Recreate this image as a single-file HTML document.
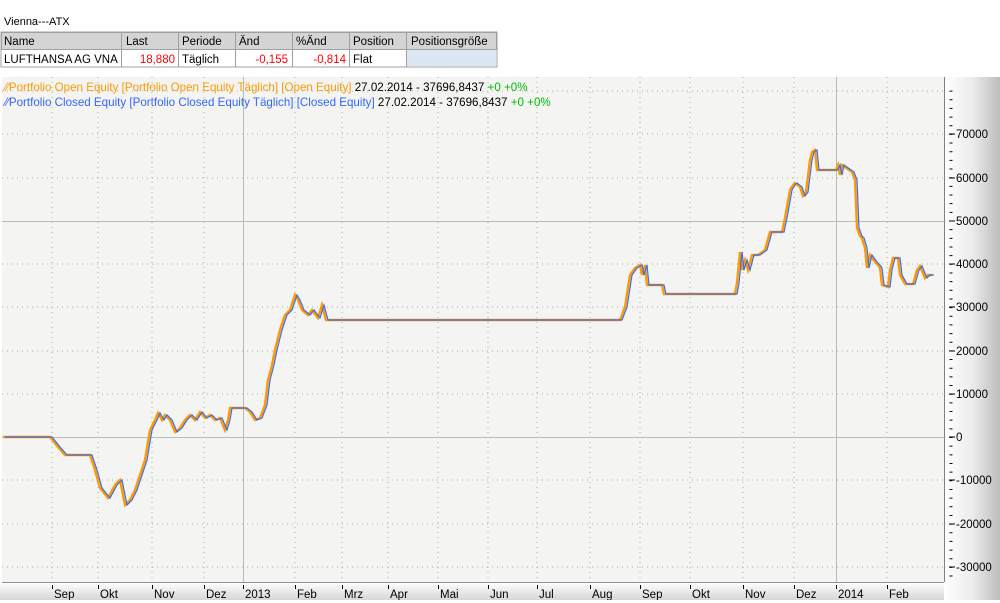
<!DOCTYPE html>
<html><head><meta charset="utf-8"><style>
body{margin:0;width:1000px;height:600px;overflow:hidden;background:#fff;font-family:"Liberation Sans",sans-serif;font-size:11px;}
</style></head><body>
<svg width="1000" height="600" xmlns="http://www.w3.org/2000/svg" font-family="Liberation Sans, sans-serif" font-size="11">
<defs>
<linearGradient id="rg" x1="0" x2="1"><stop offset="0" stop-color="#fff"/><stop offset="0.5" stop-color="#ececec"/><stop offset="1" stop-color="#bdbdbd"/></linearGradient>
<linearGradient id="bg" x1="0" y1="0" x2="0" y2="1"><stop offset="0" stop-color="#fff"/><stop offset="1" stop-color="#d6d6d6"/></linearGradient>
<polyline id="p" points="3,437 50,437 58,447 65,455 90,455 95,470 100,488 108,498 115,485 120,480 125,505 130,500 135,490 140,475 145,460 150,430 155,420 158,413 162,420 165,415 170,420 175,432 180,428 185,420 190,415 195,420 200,412 205,418 210,415 215,420 220,418 225,430 228,420 230,408 245,408 250,412 255,420 260,418 265,405 268,380 272,365 275,350 280,330 285,315 290,310 295,295 298,300 302,310 308,315 312,310 318,318 322,305 326,320 620,320 625,307 630,275 635,268 640,265 642,275 645,265 647,285 662,285 664,294 735,294 737,283 740,252 742,270 745,260 748,270 752,255 758,255 765,250 770,232 782,232 785,218 790,190 793,185 795,183 800,187 803,196 806,192 810,160 812,152 815,150 817,170 836,170 838,165 840,175 842,165 852,172 855,180 857,228 860,236 862,238 865,248 867,268 870,255 875,262 878,265 880,268 882,285 888,287 890,270 893,258 898,258 900,275 905,284 913,284 917,270 920,266 925,278 928,275 932,275"/>
</defs>
<text x="4" y="25" fill="#000">Vienna---ATX</text>
<rect x="1" y="32" width="496" height="35" fill="#fff" stroke="#a0a0a0"/>
<rect x="1.5" y="32.5" width="495" height="17" fill="#d4d4d4" stroke="#a0a0a0"/>
<rect x="407" y="50" width="89" height="16" fill="#dde7f3"/>
<g stroke="#a0a0a0"><line x1="121.5" y1="32" x2="121.5" y2="67"/><line x1="178.5" y1="32" x2="178.5" y2="67"/><line x1="235.5" y1="32" x2="235.5" y2="67"/><line x1="292.5" y1="32" x2="292.5" y2="67"/><line x1="349.5" y1="32" x2="349.5" y2="67"/><line x1="406.5" y1="32" x2="406.5" y2="67"/></g>
<g fill="#000" font-size="11.5"><text x="4" y="45">Name</text><text x="126" y="45">Last</text><text x="182" y="45">Periode</text><text x="239" y="45">Änd</text><text x="296" y="45">%Änd</text><text x="353" y="45">Position</text><text x="411" y="45">Positionsgröße</text>
<text x="4" y="63">LUFTHANSA AG VNA</text><text x="182" y="63">Täglich</text><text x="353" y="63">Flat</text></g>
<g fill="#f00" text-anchor="end" font-size="11.5"><text x="175" y="63">18,880</text><text x="288" y="63">-0,155</text><text x="346" y="63">-0,814</text></g>
<rect x="2" y="77" width="942" height="505" fill="#f4f4f3"/>
<rect x="944" y="77" width="56" height="523" fill="url(#rg)"/>
<rect x="0" y="582" width="944" height="18" fill="url(#bg)"/>
<line x1="944.5" y1="77" x2="944.5" y2="582" stroke="#808080"/>
<line x1="2" y1="582.5" x2="944" y2="582.5" stroke="#909090"/>
<g stroke="#a9b9a4" stroke-dasharray="1,4">
<line x1="2" y1="91" x2="944" y2="91"/><line x1="2" y1="134" x2="944" y2="134"/><line x1="2" y1="178" x2="944" y2="178"/><line x1="2" y1="264" x2="944" y2="264"/><line x1="2" y1="307" x2="944" y2="307"/><line x1="2" y1="351" x2="944" y2="351"/><line x1="2" y1="394" x2="944" y2="394"/><line x1="2" y1="480" x2="944" y2="480"/><line x1="2" y1="524" x2="944" y2="524"/><line x1="2" y1="567" x2="944" y2="567"/>
<line x1="52" y1="77" x2="52" y2="582"/><line x1="98" y1="77" x2="98" y2="582"/><line x1="152" y1="77" x2="152" y2="582"/><line x1="204" y1="77" x2="204" y2="582"/><line x1="295" y1="77" x2="295" y2="582"/><line x1="342" y1="77" x2="342" y2="582"/><line x1="388" y1="77" x2="388" y2="582"/><line x1="438" y1="77" x2="438" y2="582"/><line x1="488" y1="77" x2="488" y2="582"/><line x1="537" y1="77" x2="537" y2="582"/><line x1="590" y1="77" x2="590" y2="582"/><line x1="640" y1="77" x2="640" y2="582"/><line x1="690" y1="77" x2="690" y2="582"/><line x1="743" y1="77" x2="743" y2="582"/><line x1="794" y1="77" x2="794" y2="582"/><line x1="887" y1="77" x2="887" y2="582"/>
</g>
<g stroke="#b3c2b0"><line x1="2" y1="221.5" x2="944" y2="221.5"/><line x1="2" y1="437.5" x2="944" y2="437.5"/><line x1="243.5" y1="77" x2="243.5" y2="582"/><line x1="836.5" y1="77" x2="836.5" y2="582"/></g>
<g font-size="11.6">
<text x="5" y="91" fill="#f90">⁄∕Portfolio Open Equity [Portfolio Open Equity  Täglich] [Open Equity] <tspan fill="#000">27.02.2014 - 37696,8437 </tspan><tspan fill="#0b0">+0 +0%</tspan></text>
<text x="5" y="106" fill="#3366ff">⁄∕Portfolio Closed Equity [Portfolio Closed Equity  Täglich] [Closed Equity] <tspan fill="#000">27.02.2014 - 37696,8437 </tspan><tspan fill="#0b0">+0 +0%</tspan></text>
</g>
<g fill="none" stroke-linejoin="miter">
<use href="#p" stroke="#f90" stroke-width="2.4"/>
<use href="#p" stroke="#3a6cf0" stroke-width="1.2" transform="translate(2,0)"/>
</g>
<line x1="951" y1="90.6" x2="951" y2="582" stroke="#000" stroke-width="3" stroke-dasharray="1 7.66"/>
<g fill="#000" font-size="11.5">
<text x="956" y="138">70000</text><text x="956" y="182">60000</text><text x="956" y="225">50000</text><text x="956" y="268">40000</text><text x="956" y="311">30000</text><text x="956" y="355">20000</text><text x="956" y="398">10000</text><text x="956" y="441">0</text><text x="956" y="484">-10000</text><text x="956" y="528">-20000</text><text x="956" y="571">-30000</text>
</g>
<g stroke="#000">
<line x1="949" y1="134" x2="955" y2="134"/><line x1="949" y1="178" x2="955" y2="178"/><line x1="949" y1="221" x2="955" y2="221"/><line x1="949" y1="264" x2="955" y2="264"/><line x1="949" y1="307" x2="955" y2="307"/><line x1="949" y1="351" x2="955" y2="351"/><line x1="949" y1="394" x2="955" y2="394"/><line x1="949" y1="437" x2="955" y2="437"/><line x1="949" y1="480" x2="955" y2="480"/><line x1="949" y1="524" x2="955" y2="524"/><line x1="949" y1="567" x2="955" y2="567"/>
</g>
<g stroke="#000"><line x1="52.5" y1="585" x2="52.5" y2="589"/><line x1="98.5" y1="585" x2="98.5" y2="589"/><line x1="152.5" y1="585" x2="152.5" y2="589"/><line x1="204.5" y1="585" x2="204.5" y2="589"/><line x1="243.5" y1="585" x2="243.5" y2="589"/><line x1="295.5" y1="585" x2="295.5" y2="589"/><line x1="342.5" y1="585" x2="342.5" y2="589"/><line x1="388.5" y1="585" x2="388.5" y2="589"/><line x1="438.5" y1="585" x2="438.5" y2="589"/><line x1="488.5" y1="585" x2="488.5" y2="589"/><line x1="537.5" y1="585" x2="537.5" y2="589"/><line x1="590.5" y1="585" x2="590.5" y2="589"/><line x1="640.5" y1="585" x2="640.5" y2="589"/><line x1="690.5" y1="585" x2="690.5" y2="589"/><line x1="743.5" y1="585" x2="743.5" y2="589"/><line x1="794.5" y1="585" x2="794.5" y2="589"/><line x1="836.5" y1="585" x2="836.5" y2="589"/><line x1="887.5" y1="585" x2="887.5" y2="589"/></g>
<g fill="#000" font-size="11.5"><text x="54" y="598">Sep</text><text x="100" y="598">Okt</text><text x="154" y="598">Nov</text><text x="206" y="598">Dez</text><text x="245" y="598">2013</text><text x="297" y="598">Feb</text><text x="344" y="598">Mrz</text><text x="390" y="598">Apr</text><text x="440" y="598">Mai</text><text x="490" y="598">Jun</text><text x="539" y="598">Jul</text><text x="592" y="598">Aug</text><text x="642" y="598">Sep</text><text x="692" y="598">Okt</text><text x="745" y="598">Nov</text><text x="796" y="598">Dez</text><text x="838" y="598">2014</text><text x="889" y="598">Feb</text></g>
</svg>
</body></html>
